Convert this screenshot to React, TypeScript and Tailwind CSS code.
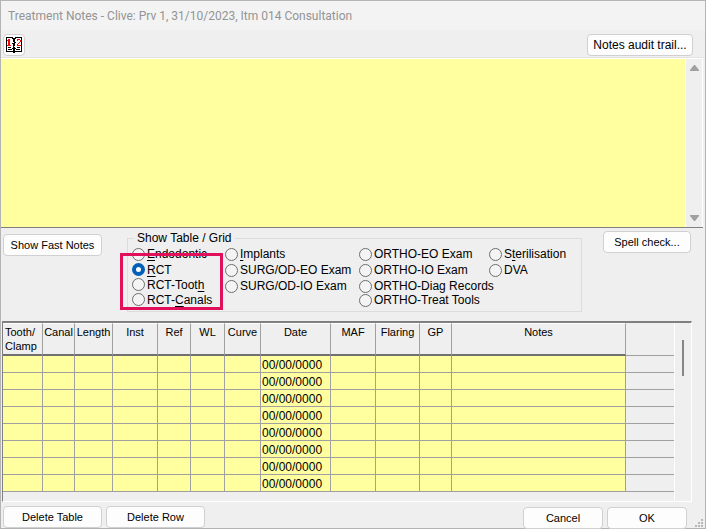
import React, { useState } from 'react';

interface TableOption {
  id: string;
  before?: string;
  hotkey?: string;
  after: string;
}

const COLUMN_ONE: TableOption[] = [
  { id: 'endodontic', hotkey: 'E', after: 'ndodontic' },
  { id: 'rct', hotkey: 'R', after: 'CT' },
  { id: 'rct-tooth', before: 'RCT-Toot', hotkey: 'h', after: '' },
  { id: 'rct-canals', before: 'RCT-', hotkey: 'C', after: 'anals' },
];

const COLUMN_TWO: TableOption[] = [
  { id: 'implants', hotkey: 'I', after: 'mplants' },
  { id: 'surg-eo', after: 'SURG/OD-EO Exam' },
  { id: 'surg-io', after: 'SURG/OD-IO Exam' },
];

const COLUMN_THREE: TableOption[] = [
  { id: 'ortho-eo', after: 'ORTHO-EO Exam' },
  { id: 'ortho-io', after: 'ORTHO-IO Exam' },
  { id: 'ortho-diag', after: 'ORTHO-Diag Records' },
  { id: 'ortho-treat', after: 'ORTHO-Treat Tools' },
];

const COLUMN_FOUR: TableOption[] = [
  { id: 'sterilisation', before: 'S', hotkey: 't', after: 'erilisation' },
  { id: 'dva', after: 'DVA' },
];

const GRID_COLUMNS = [
  { name: 'Tooth/ Clamp', width: 'w-[40px]' },
  { name: 'Canal', width: 'w-[32px]' },
  { name: 'Length', width: 'w-[38px]' },
  { name: 'Inst', width: 'w-[45px]' },
  { name: 'Ref', width: 'w-[33px]' },
  { name: 'WL', width: 'w-[34px]' },
  { name: 'Curve', width: 'w-[36px]' },
  { name: 'Date', width: 'w-[70px]' },
  { name: 'MAF', width: 'w-[45px]' },
  { name: 'Flaring', width: 'w-[44px]' },
  { name: 'GP', width: 'w-[32px]' },
  { name: 'Notes', width: '' },
];

const ROWS = Array.from({ length: 8 }, () => '00/00/0000');

interface ButtonProps {
  className?: string;
  children: React.ReactNode;
}

const Button: React.FC<ButtonProps> = ({ className = 'w-[99px] text-[11px]', children }) => (
  <button
    type="button"
    className={`h-[22px] shrink-0 rounded-[4px] border border-[#d0d0d0] bg-[#fdfdfd] text-center leading-5 whitespace-nowrap hover:bg-[#e5f1fb] ${className}`}
  >
    {children}
  </button>
);

interface RadioListProps {
  options: TableOption[];
  selected: string;
  onSelect: (id: string) => void;
  rowClass: string;
}

const RadioList: React.FC<RadioListProps> = ({ options, selected, onSelect, rowClass }) => (
  <div>
    {options.map(option => (
      <label key={option.id} className={`flex items-center gap-[2px] whitespace-nowrap ${rowClass}`}>
        <input
          type="radio"
          name="table"
          checked={selected === option.id}
          onChange={() => onSelect(option.id)}
          className="h-[13px] w-[13px] shrink-0 appearance-none rounded-full border border-[#6e6e6e] bg-[#f4f4f4] checked:border-4 checked:border-[#005fb8] checked:bg-white"
        />
        <span>
          {option.before}
          {option.hotkey && <span className="underline underline-offset-2">{option.hotkey}</span>}
          {option.after}
        </span>
      </label>
    ))}
  </div>
);

const NotebookIcon = () => (
  <svg width="16" height="16" viewBox="0 0 16 16" shapeRendering="crispEdges" aria-hidden="true">
    <path d="M0 0h16v15H0z" fill="#000" />
    <path d="M1 1h6v13H1zM9 1h6v13H9z" fill="#fff" />
    {/* Spiral binding */}
    <path d="M7 0h2v1H7zM7 5h1v1H7zM8 9h1v1H8z" fill="#fff" />
    <path d="M6 1h1v1H6zM9 1h1v1H9zM6 6h1v1H6zM9 5h1v1H9zM6 11h1v1H6zM9 11h1v1H9zM7 15h2v1H7z" fill="#000" />
    <path d="M2 10h3v1H2zM2 12h4v1H2zM11 10h3v1h-3zM10 12h4v1h-4z" fill="#000" />
    <path d="M2 2h2v6h1v1H1V8h1V4H1V3h1z" fill="#f00" />
    <path d="M11 2h3v1h1v2h-1v1h-1v1h-1v1h3v1h-4V7h1V6h1V5h1V3h-2v1h-1z" fill="#f00" />
  </svg>
);

const App: React.FC = () => {
  const [selected, setSelected] = useState('rct');
  const [notes, setNotes] = useState('');

  return (
    <main className="flex flex-col border border-[#b4b4b4] bg-[#efefef] font-['Liberation_Sans',Arial,sans-serif] text-[12px] text-black">
      {/* Title bar */}
      <header className="flex h-[29px] items-center bg-[#f3f3f3] px-[7px]">
        <h1 className="font-[Roboto,'Open_Sans',sans-serif] text-[12px] whitespace-nowrap text-[#949494]">
          Treatment Notes - Clive: Prv 1, 31/10/2023, Itm 014 Consultation
        </h1>
      </header>

      {/* Toolbar */}
      <div className="flex h-[27px] items-start justify-between pt-1 pr-3 pl-[2px]">
        <button
          type="button"
          aria-label="Tooth chart notes"
          className="flex h-[22px] w-[22px] items-center justify-center rounded-[4px] border border-[#d0d0d0] bg-[#fdfdfd]"
        >
          <NotebookIcon />
        </button>
        <Button className="w-[106px] text-[12px]">Notes audit trail...</Button>
      </div>

      {/* Notes text */}
      <div className="mr-[2px] flex h-[171px] border-t border-b border-t-[#e3e3e3] border-b-[#808080]">
        <textarea
          aria-label="Treatment notes"
          value={notes}
          onChange={e => setNotes(e.target.value)}
          className="min-w-0 flex-1 resize-none border-t border-white bg-[#ffffa0] px-1 outline-none"
        />
        <div className="flex w-[18px] flex-col items-center justify-between border-t border-r border-l border-white py-[6px]">
          <svg width="9" height="6" viewBox="0 0 9 6" aria-hidden="true">
            <path d="M4 0h1l4 5v1H0V5z" fill="#a0a0a0" />
          </svg>
          <svg width="9" height="6" viewBox="0 0 9 6" aria-hidden="true">
            <path d="M4 6h1l4-5V0H0v1z" fill="#a0a0a0" />
          </svg>
        </div>
      </div>

      {/* Table picker */}
      <section className="flex items-start pr-[14px] pl-[2px]">
        <div className="pt-[6px]">
          <Button>Show Fast Notes</Button>
        </div>
        <fieldset className="mt-[2px] ml-[25px] h-[82px] w-[455px] shrink-0 border border-[#dcdcdc] pl-1">
          <legend className="ml-[2px] h-4 px-[3px] leading-4">Show Table / Grid</legend>
          <div className="flex items-start">
            <div className="relative w-[93px]">
              <RadioList options={COLUMN_ONE} selected={selected} onSelect={setSelected} rowClass="h-[15px] first:h-4" />
              <div className="pointer-events-none absolute top-[7px] -left-3 h-[57px] w-[103px] border-[3px] border-[#e0105a]" />
            </div>
            <div className="w-[134px]">
              <RadioList options={COLUMN_TWO} selected={selected} onSelect={setSelected} rowClass="h-4" />
            </div>
            <div className="w-[130px]">
              <RadioList options={COLUMN_THREE} selected={selected} onSelect={setSelected} rowClass="h-4 last:h-3" />
            </div>
            <RadioList options={COLUMN_FOUR} selected={selected} onSelect={setSelected} rowClass="h-4" />
          </div>
        </fieldset>
        <div className="ml-auto pt-[3px]">
          <Button className="w-[88px] text-[11px]">Spell check...</Button>
        </div>
      </section>

      {/* Canal grid */}
      <div className="mt-[9px] mr-[13px] ml-px flex h-[181px] border-t-2 border-r border-b border-l border-t-[#808080] border-r-white border-b-white border-l-[#808080]">
        <div className="min-w-0 flex-1">
          <table className="w-full table-fixed border-separate border-spacing-0">
            <thead>
              <tr className="h-[33px] text-[11px]">
                {GRID_COLUMNS.map(column => (
                  <th
                    key={column.name}
                    scope="col"
                    className={`border-t border-r border-b-2 border-t-white border-r-[#a0a0a0] border-b-[#707070] p-0 text-center align-top leading-[14px] font-normal first:pl-[2px] first:text-left ${column.width}`}
                  >
                    <div className="pt-px">{column.name}</div>
                  </th>
                ))}
                <td className="w-12 border-b border-[#a0a0a0]" />
              </tr>
            </thead>
            <tbody>
              {ROWS.map((date, i) => (
                <tr key={i} className="h-[17px]">
                  {GRID_COLUMNS.map(column => (
                    <td
                      key={column.name}
                      className="border-r border-b border-[#a0a0a0] bg-[#ffffa0] p-0 pt-[2px] pl-px leading-[14px]"
                    >
                      {column.name === 'Date' ? date : null}
                    </td>
                  ))}
                  <td className="border-b border-[#a0a0a0]" />
                </tr>
              ))}
            </tbody>
          </table>
        </div>
        <div className="flex w-[17px] justify-center border-l border-white pt-[17px]">
          <div className="h-9 w-[2px] bg-[#858585]" />
        </div>
      </div>

      {/* Footer */}
      <footer className="flex h-[26px] items-start pt-1 pl-[2px]">
        <Button>Delete Table</Button>
        <div className="ml-1">
          <Button>Delete Row</Button>
        </div>
        <div className="mt-px ml-auto flex gap-1">
          <Button className="w-20 text-[11px]">Cancel</Button>
          <Button className="w-20 text-[11px]">OK</Button>
        </div>
        <svg width="9" height="9" viewBox="0 0 9 9" className="mr-px ml-2 self-end" shapeRendering="crispEdges" aria-hidden="true">
          <path d="M6 0h2v2H6zM3 3h2v2H3zM6 3h2v2H6zM0 6h2v2H0zM3 6h2v2H3zM6 6h2v2H6z" fill="#b8b8b8" />
        </svg>
      </footer>
    </main>
  );
};

export default App;
